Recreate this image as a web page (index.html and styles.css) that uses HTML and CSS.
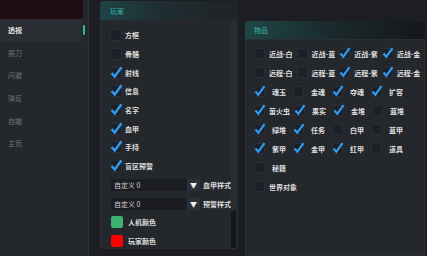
FILE: index.html
```html
<!DOCTYPE html>
<html lang="zh-CN">
<head>
<meta charset="utf-8">
<title>Menu</title>
<link rel="stylesheet" href="styles.css">
</head>
<body>
<div class="app">
  <aside class="sidebar">
    <div class="brand"></div>
    <nav class="nav">
      <div class="nav-item active"><div class="nav-link">透视</div><i class="ind"></i></div>
      <div class="nav-item"><div class="nav-link">振刀</div></div>
      <div class="nav-item"><div class="nav-link">闪避</div></div>
      <div class="nav-item"><div class="nav-link">弹反</div></div>
      <div class="nav-item"><div class="nav-link">自瞄</div></div>
      <div class="nav-item"><div class="nav-link">主页</div></div>
    </nav>
  </aside>

  <main class="main">
    <section class="panel player">
      <div class="panel-head">玩家</div>
      <div class="panel-body">
        <div class="pb-content">
          <div class="row"><span class="cb"></span><span class="lab">方框</span></div>
          <div class="row"><span class="cb"></span><span class="lab">骨骼</span></div>
          <div class="row"><span class="cb on"><svg viewBox="0 0 11 11"><polyline points="1.5,5.5 4.3,8.8 10.5,0.2"/></svg></span><span class="lab">射线</span></div>
          <div class="row"><span class="cb on"><svg viewBox="0 0 11 11"><polyline points="1.5,5.5 4.3,8.8 10.5,0.2"/></svg></span><span class="lab">信息</span></div>
          <div class="row"><span class="cb on"><svg viewBox="0 0 11 11"><polyline points="1.5,5.5 4.3,8.8 10.5,0.2"/></svg></span><span class="lab">名字</span></div>
          <div class="row"><span class="cb on"><svg viewBox="0 0 11 11"><polyline points="1.5,5.5 4.3,8.8 10.5,0.2"/></svg></span><span class="lab">血甲</span></div>
          <div class="row"><span class="cb on"><svg viewBox="0 0 11 11"><polyline points="1.5,5.5 4.3,8.8 10.5,0.2"/></svg></span><span class="lab">手持</span></div>
          <div class="row"><span class="cb on"><svg viewBox="0 0 11 11"><polyline points="1.5,5.5 4.3,8.8 10.5,0.2"/></svg></span><span class="lab">盲区预警</span></div>
          <div class="row"><div class="combo"><span class="combo-val">自定义 0</span><span class="combo-btn">▼</span></div><span class="lab combo-lab">血甲样式</span></div>
          <div class="row"><div class="combo"><span class="combo-val">自定义 0</span><span class="combo-btn">▼</span></div><span class="lab combo-lab">预警样式</span></div>
          <div class="row"><span class="swatch green"></span><span class="lab swatch-lab">人机颜色</span></div>
          <div class="row"><span class="swatch red"></span><span class="lab swatch-lab">玩家颜色</span></div>
        </div>
        <div class="scroll"><div class="thumb"></div></div>
      </div>
    </section>

    <section class="panel items">
      <div class="panel-head">物品</div>
      <div class="panel-body">
        <div class="irow">
          <div class="item"><span class="cb"></span><span class="ilab">近战-白</span></div>
          <div class="item"><span class="cb"></span><span class="ilab">近战-蓝</span></div>
          <div class="item"><span class="cb on"><svg viewBox="0 0 11 11"><polyline points="1.5,5.5 4.3,8.8 10.5,0.2"/></svg></span><span class="ilab">近战-紫</span></div>
          <div class="item"><span class="cb on"><svg viewBox="0 0 11 11"><polyline points="1.5,5.5 4.3,8.8 10.5,0.2"/></svg></span><span class="ilab">近战-金</span></div>
        </div>
        <div class="irow">
          <div class="item"><span class="cb"></span><span class="ilab">远程-白</span></div>
          <div class="item"><span class="cb"></span><span class="ilab">远程-蓝</span></div>
          <div class="item"><span class="cb on"><svg viewBox="0 0 11 11"><polyline points="1.5,5.5 4.3,8.8 10.5,0.2"/></svg></span><span class="ilab">远程-紫</span></div>
          <div class="item"><span class="cb on"><svg viewBox="0 0 11 11"><polyline points="1.5,5.5 4.3,8.8 10.5,0.2"/></svg></span><span class="ilab">远程-金</span></div>
        </div>
        <div class="irow">
          <div class="item"><span class="cb on"><svg viewBox="0 0 11 11"><polyline points="1.5,5.5 4.3,8.8 10.5,0.2"/></svg></span><span class="ilab">魂玉</span></div>
          <div class="item"><span class="cb"></span><span class="ilab">金魂</span></div>
          <div class="item"><span class="cb on"><svg viewBox="0 0 11 11"><polyline points="1.5,5.5 4.3,8.8 10.5,0.2"/></svg></span><span class="ilab">夺魂</span></div>
          <div class="item"><span class="cb on"><svg viewBox="0 0 11 11"><polyline points="1.5,5.5 4.3,8.8 10.5,0.2"/></svg></span><span class="ilab">扩容</span></div>
        </div>
        <div class="irow">
          <div class="item"><span class="cb on"><svg viewBox="0 0 11 11"><polyline points="1.5,5.5 4.3,8.8 10.5,0.2"/></svg></span><span class="ilab">萤火虫</span></div>
          <div class="item"><span class="cb on"><svg viewBox="0 0 11 11"><polyline points="1.5,5.5 4.3,8.8 10.5,0.2"/></svg></span><span class="ilab">果实</span></div>
          <div class="item"><span class="cb on"><svg viewBox="0 0 11 11"><polyline points="1.5,5.5 4.3,8.8 10.5,0.2"/></svg></span><span class="ilab">金堆</span></div>
          <div class="item"><span class="cb"></span><span class="ilab">蓝堆</span></div>
        </div>
        <div class="irow">
          <div class="item"><span class="cb on"><svg viewBox="0 0 11 11"><polyline points="1.5,5.5 4.3,8.8 10.5,0.2"/></svg></span><span class="ilab">绿堆</span></div>
          <div class="item"><span class="cb on"><svg viewBox="0 0 11 11"><polyline points="1.5,5.5 4.3,8.8 10.5,0.2"/></svg></span><span class="ilab">任务</span></div>
          <div class="item"><span class="cb"></span><span class="ilab">白甲</span></div>
          <div class="item"><span class="cb"></span><span class="ilab">蓝甲</span></div>
        </div>
        <div class="irow">
          <div class="item"><span class="cb on"><svg viewBox="0 0 11 11"><polyline points="1.5,5.5 4.3,8.8 10.5,0.2"/></svg></span><span class="ilab">紫甲</span></div>
          <div class="item"><span class="cb on"><svg viewBox="0 0 11 11"><polyline points="1.5,5.5 4.3,8.8 10.5,0.2"/></svg></span><span class="ilab">金甲</span></div>
          <div class="item"><span class="cb on"><svg viewBox="0 0 11 11"><polyline points="1.5,5.5 4.3,8.8 10.5,0.2"/></svg></span><span class="ilab">红甲</span></div>
          <div class="item"><span class="cb"></span><span class="ilab">道具</span></div>
        </div>
        <div class="irow">
          <div class="item"><span class="cb"></span><span class="ilab">秘籍</span></div>
        </div>
        <div class="irow">
          <div class="item"><span class="cb"></span><span class="ilab">世界对象</span></div>
        </div>
      </div>
    </section>
  </main>
</div>
</body>
</html>
```

FILE: styles.css
```css
* { box-sizing: border-box; }
html, body {
  margin: 0;
  padding: 0;
  width: 427px;
  height: 256px;
  overflow: hidden;
  background: #1c1e23;
  font-family: "Noto Sans CJK SC", "Noto Sans", sans-serif;
}
.app {
  display: flex;
  height: 256px;
}
.sidebar {
  width: 89px;
  flex: none;
  background: #24272c;
  border-right: 1px solid #2c2f35;
}
.brand {
  width: 83px;
  height: 19px;
  background: #1f0f13;
}
.nav-item {
  display: flex;
  align-items: center;
  height: 22.6px;
}
.nav-link {
  width: 81px;
  height: 100%;
  padding-left: 8px;
  display: flex;
  align-items: center;
  font-size: 7px;
  color: #6f7379;
}
.nav-item.active .nav-link {
  background: #2b2e33;
  color: #e4e4e4;
  font-weight: 700;
}
.ind {
  width: 2px;
  height: 10px;
  margin-left: 2px;
  background: #2bbf88;
  border-radius: 1px;
}
.main {
  flex: 1;
  display: flex;
  gap: 7px;
  padding-left: 11px;
  padding-right: 5px;
}
.panel { display: flex; flex-direction: column; }
.panel.player { width: 138px; margin-top: 1px; }
.panel.items { flex: 1; margin-top: 21px; }
.panel-head {
  display: flex;
  align-items: center;
  padding-left: 10px;
  font-size: 7px;
  color: #3bb6ad;
  border-radius: 3px 3px 0 0;
}
.player .panel-head {
  height: 19px;
  background: linear-gradient(90deg, #1e4346 0%, #1f2d31 45%, #202328 100%);
}
.items .panel-head {
  height: 18px;
  padding-left: 9px;
  background: linear-gradient(90deg, #1f4646 0%, #1b2b2d 45%, #15171a 100%);
}
.panel-body {
  background: #24272c;
  border: 1px solid #2a2d33;
}
.player .panel-body {
  height: 229px;
  display: flex;
  border-radius: 0 0 3px 3px;
}
.items .panel-body {
  flex: 1;
  padding: 4px 0 0 8px;
}
.pb-content {
  flex: 1;
  padding: 5px 0 0 9px;
}
.scroll {
  width: 5px;
  margin-right: 1px;
  background: #141619;
  border-radius: 2px;
}
.thumb {
  height: 190px;
  background: #2a2d33;
  border-radius: 2px;
}
.row {
  display: flex;
  align-items: center;
  height: 18.7px;
}
.cb {
  width: 11px;
  height: 11px;
  flex: none;
  background: #1d2027;
  border: 1px solid #2a2e36;
  border-radius: 2px;
  position: relative;
}
.player .cb {
  width: 12px;
  height: 12px;
}
.cb svg {
  position: absolute;
  left: -1px;
  top: -1px;
  width: 11px;
  height: 11px;
  overflow: visible;
}
.player .cb svg {
  width: 12px;
  height: 12px;
}
.cb polyline {
  fill: none;
  stroke: #2e9cf2;
  stroke-width: 2.2;
  stroke-linejoin: miter;
}
.lab {
  margin-left: 3px;
  font-size: 7px;
  font-weight: 700;
  color: #dedede;
  white-space: nowrap;
}
.combo {
  display: flex;
  height: 12px;
  margin-left: 1px;
}
.combo-val {
  width: 76px;
  background: #1b1d22;
  padding-left: 3px;
  font-size: 7px;
  color: #d2d2d2;
  display: flex;
  align-items: center;
}
.combo-btn {
  width: 13px;
  background: #2d3037;
  color: #f0f0f0;
  font-size: 7px;
  display: flex;
  align-items: center;
  justify-content: center;
}
.combo-lab { margin-left: 3px; }
.swatch {
  width: 12px;
  height: 12px;
  margin-left: 1px;
  border-radius: 2px;
}
.swatch.green { background: #3cb371; }
.swatch.red { background: #fe0000; }
.swatch-lab { margin-left: 5px; }
.irow {
  display: flex;
  align-items: center;
  height: 19px;
}
.item {
  display: flex;
  align-items: center;
}
.ilab {
  min-width: 20px;
  padding: 0 4px;
  text-align: center;
  font-size: 7px;
  font-weight: 700;
  color: #dedede;
  white-space: nowrap;
  box-sizing: content-box;
}
```
